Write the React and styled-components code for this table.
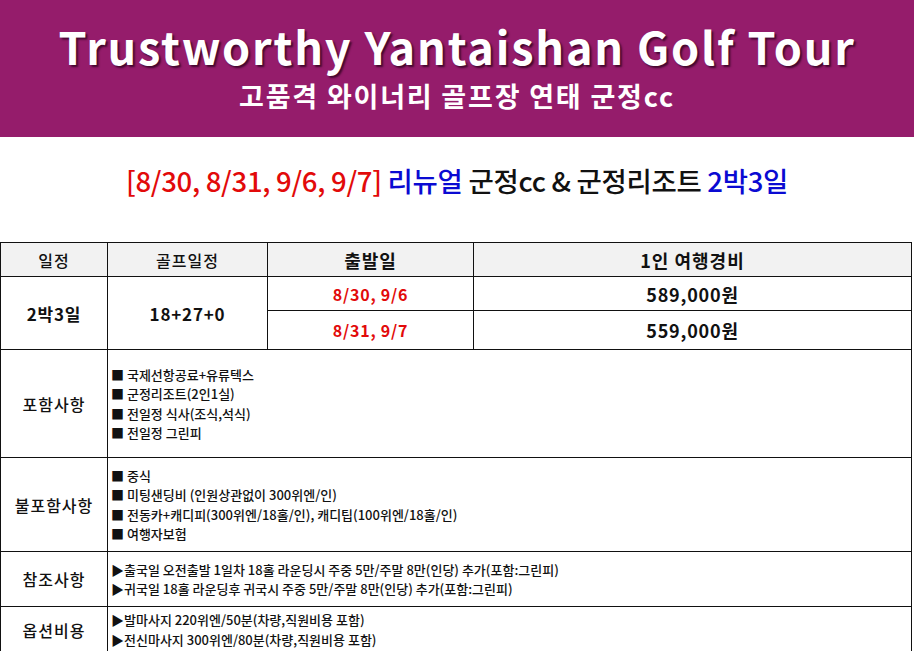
import React from "react";
import styled, { createGlobalStyle } from "styled-components";

const GlobalStyle = createGlobalStyle`
  body {
    margin: 0;
    background: #ffffff;
    font-family: "Noto Sans CJK KR", "Noto Sans", sans-serif;
    color: #111;
  }
`;

const Banner = styled.header`
  background-color: #951c6b;
  height: 137px;
  display: flex;
  flex-direction: column;
  align-items: center;
  padding-top: 20px;
  box-sizing: border-box;
  color: #fff;
`;

const BannerTitle = styled.h1`
  margin: 0;
  font-size: 45px;
  font-weight: 700;
  line-height: 52px;
  letter-spacing: 1.8px;
  text-shadow: 2px 2px 2px rgba(40, 0, 25, 0.75);
`;

const BannerSub = styled.h2`
  margin: 8px 0 0;
  font-size: 27px;
  font-weight: 700;
  line-height: 32px;
  letter-spacing: 1.8px;
`;

const Headline = styled.div`
  height: 105px;
  display: flex;
  justify-content: center;
  padding-top: 23px;
  box-sizing: border-box;
  font-size: 27.5px;
  font-weight: 500;
  letter-spacing: -0.3px;
`;

const Tone = styled.span`
  color: ${({ $tone }) =>
    $tone === "red" ? "#e20a0a" : $tone === "blue" ? "#0a0ad2" : "#111"};
`;

const Table = styled.table`
  width: 912px;
  border-collapse: collapse;
  table-layout: fixed;
`;

const Th = styled.th`
  border: 1.5px solid #111;
  background: #f2f2f2;
  height: 33px;
  padding: 0;
  font-size: ${({ $big }) => ($big ? "18px" : "16px")};
  font-weight: ${({ $big }) => ($big ? 700 : 500)};
  letter-spacing: 1px;
`;

const Td = styled.td`
  border: 1.5px solid #111;
  padding: 0;
  height: ${({ $h }) => $h}px;
  text-align: center;
  font-size: ${({ $size }) => $size || 17}px;
  font-weight: 700;
  letter-spacing: 0.8px;
  color: ${({ $red }) => ($red ? "#e20a0a" : "#111")};
`;

const LabelCell = styled.td`
  border: 1.5px solid #111;
  padding: 0;
  height: ${({ $h }) => $h}px;
  text-align: center;
  font-size: 16px;
  font-weight: 500;
  letter-spacing: 1px;
`;

const ListCell = styled.td`
  border: 1.5px solid #111;
  padding: 0 0 0 3px;
  vertical-align: middle;
`;

const List = styled.ul`
  list-style: none;
  margin: 0;
  padding: 0;
`;

const Item = styled.li`
  font-size: 13px;
  line-height: 19.5px;
  font-weight: 500;
  white-space: nowrap;
`;

const included = [
  "국제선항공료+유류텍스",
  "군정리조트(2인1실)",
  "전일정 식사(조식,석식)",
  "전일정 그린피",
];

const excluded = [
  "중식",
  "미팅샌딩비 (인원상관없이 300위엔/인)",
  "전동카+캐디피(300위엔/18홀/인), 캐디팁(100위엔/18홀/인)",
  "여행자보험",
];

const notes = [
  "출국일 오전출발 1일차 18홀 라운딩시 주중 5만/주말 8만(인당) 추가(포함:그린피)",
  "귀국일 18홀 라운딩후 귀국시 주중 5만/주말 8만(인당) 추가(포함:그린피)",
];

const options = [
  "발마사지 220위엔/50분(차량,직원비용 포함)",
  "전신마사지 300위엔/80분(차량,직원비용 포함)",
];

const Bullets = ({ items, mark }) => (
  <List>
    {items.map((t) => (
      <Item key={t}>
        {mark === "square" ? "■ " : "▶"}
        {t}
      </Item>
    ))}
  </List>
);

const App = () => (
  <>
    <GlobalStyle />
    <Banner>
      <BannerTitle>Trustworthy Yantaishan Golf Tour</BannerTitle>
      <BannerSub>고품격 와이너리 골프장 연태 군정cc</BannerSub>
    </Banner>

    <Headline>
      <Tone $tone="red">[8/30, 8/31, 9/6, 9/7]</Tone>&nbsp;
      <Tone $tone="blue">리뉴얼</Tone>&nbsp;
      <Tone>군정cc &amp; 군정리조트</Tone>&nbsp;
      <Tone $tone="blue">2박3일</Tone>
    </Headline>

    <Table>
      <colgroup>
        <col style={{ width: 107 }} />
        <col style={{ width: 160 }} />
        <col style={{ width: 206 }} />
        <col />
      </colgroup>
      <thead>
        <tr>
          <Th>일정</Th>
          <Th>골프일정</Th>
          <Th $big>출발일</Th>
          <Th $big>1인 여행경비</Th>
        </tr>
      </thead>
      <tbody>
        <tr>
          <Td rowSpan={2}>2박3일</Td>
          <Td rowSpan={2}>18+27+0</Td>
          <Td $h={33} $size={16} $red>8/30, 9/6</Td>
          <Td $h={33} $size={18}>589,000원</Td>
        </tr>
        <tr>
          <Td $h={38} $size={16} $red>8/31, 9/7</Td>
          <Td $h={38} $size={18}>559,000원</Td>
        </tr>
        <tr>
          <LabelCell $h={107}>포함사항</LabelCell>
          <ListCell colSpan={3}>
            <Bullets items={included} mark="square" />
          </ListCell>
        </tr>
        <tr>
          <LabelCell $h={93}>불포함사항</LabelCell>
          <ListCell colSpan={3}>
            <Bullets items={excluded} mark="square" />
          </ListCell>
        </tr>
        <tr>
          <LabelCell $h={54}>참조사항</LabelCell>
          <ListCell colSpan={3}>
            <Bullets items={notes} />
          </ListCell>
        </tr>
        <tr>
          <LabelCell $h={45}>옵션비용</LabelCell>
          <ListCell colSpan={3}>
            <Bullets items={options} />
          </ListCell>
        </tr>
      </tbody>
    </Table>
  </>
);

export default App;
